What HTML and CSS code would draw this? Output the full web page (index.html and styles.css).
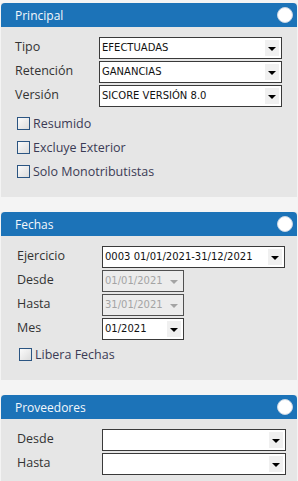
FILE: index.html
```html
<!DOCTYPE html>
<html lang="es">
<head>
    <meta charset="UTF-8">
    <meta name="viewport" content="width=device-width, initial-scale=1.0">
    <title>Retenciones</title>
    <link rel="stylesheet" href="styles.css">
</head>
<body>
    <section class="panel panel-principal">
        <header class="panel-head">
            <span>Principal</span>
            <i class="knob"></i>
        </header>
        <div class="panel-body">
            <div class="form">
                <label>Tipo</label>
                <div class="select"><span>EFECTUADAS</span><b class="arrow"></b></div>
                <label>Retención</label>
                <div class="select"><span>GANANCIAS</span><b class="arrow"></b></div>
                <label>Versión</label>
                <div class="select"><span>SICORE VERSIÓN 8.0</span><b class="arrow"></b></div>
            </div>
            <ul class="checks">
                <li><input type="checkbox"> Resumido</li>
                <li><input type="checkbox"> Excluye Exterior</li>
                <li><input type="checkbox"> Solo Monotributistas</li>
            </ul>
        </div>
    </section>

    <section class="panel panel-fechas">
        <header class="panel-head">
            <span>Fechas</span>
            <i class="knob"></i>
        </header>
        <div class="panel-body">
            <div class="form">
                <label>Ejercicio</label>
                <div class="select"><span>0003 01/01/2021-31/12/2021</span><b class="arrow"></b></div>
                <label>Desde</label>
                <div class="select small disabled"><span>01/01/2021</span><b class="arrow"></b></div>
                <label>Hasta</label>
                <div class="select small disabled"><span>31/01/2021</span><b class="arrow"></b></div>
                <label>Mes</label>
                <div class="select small"><span>01/2021</span><b class="arrow"></b></div>
            </div>
            <ul class="checks">
                <li><input type="checkbox"> Libera Fechas</li>
            </ul>
        </div>
    </section>

    <section class="panel panel-prov">
        <header class="panel-head">
            <span>Proveedores</span>
            <i class="knob"></i>
        </header>
        <div class="panel-body">
            <div class="form">
                <label>Desde</label>
                <div class="select"><span></span><b class="arrow"></b></div>
                <label>Hasta</label>
                <div class="select"><span></span><b class="arrow"></b></div>
            </div>
        </div>
    </section>
</body>
</html>
```
FILE: styles.css
```css
*{
    box-sizing: border-box;
}
body{
    margin: 0;
    padding-top: 3px;
    background-color: #f4f4f4;
    font-family: "Open Sans", "Noto Sans", sans-serif;
    color: #333;
}
.panel{
    margin: 0 1px 15px;
    background-color: #e6e6e6;
}
.panel-head{
    height: 24px;
    padding: 0 4px 0 14px;
    display: flex;
    align-items: center;
    justify-content: space-between;
    background-color: #1c73b8;
    color: #f4f8fc;
    font-size: 12px;
    border-radius: 4px 4px 0 0;
}
.knob{
    width: 16px;
    height: 16px;
    border-radius: 50%;
    background-color: #fff;
    border: 1px solid #c9d6e4;
}
.panel-body{
    padding: 10px 15px 0 14px;
}
.panel-principal .panel-body{
    height: 170px;
}
.panel-fechas .panel-body{
    height: 144px;
    padding-left: 16px;
    padding-right: 12px;
}
.panel-prov .panel-body{
    padding-left: 16px;
    padding-right: 11px;
    height: 70px;
}
.form{
    display: grid;
    grid-template-columns: 84px 1fr;
    row-gap: 2px;
    align-items: center;
}
.panel-fechas .form, .panel-prov .form{
    grid-template-columns: 85px 1fr;
}
.form label{
    font-size: 12.5px;
    line-height: 18px;
    margin-top: -3px;
}
.select{
    height: 22px;
    display: flex;
    align-items: center;
    background-color: #fff;
    border: 1px solid #3a3a3a;
    padding: 2px;
    font-family: "DejaVu Sans", sans-serif;
    font-size: 10px;
    color: #111;
}
.select span{
    flex: 1;
    line-height: 16px;
    white-space: nowrap;
    overflow: hidden;
}
.select.small{
    width: 82px;
}
.arrow{
    width: 14px;
    height: 100%;
    background-color: #f0f0f0;
    position: relative;
}
.arrow::after{
    content: "";
    position: absolute;
    left: 3px;
    top: 7px;
    border-left: 4px solid transparent;
    border-right: 4px solid transparent;
    border-top: 4px solid #000;
}
.select.disabled{
    background-color: #ececec;
    border-color: #505050;
    color: #a4a4a4;
}
.select.disabled .arrow{
    background-color: transparent;
}
.select.disabled .arrow::after{
    border-top-color: #a4a4a4;
}
.checks{
    list-style: none;
    margin: 4px 0 0 2px;
    padding: 0;
    font-size: 12.5px;
    color: #3b3b55;
}
.checks li{
    height: 24px;
    display: flex;
    align-items: center;
    gap: 3px;
}
.checks input{
    appearance: none;
    margin: 0;
    width: 13px;
    height: 13px;
    border: 1px solid #2b5582;
    background: linear-gradient(135deg, #fbfbfb, #dcdcdc);
}
.panel-fechas .checks{
    margin-top: 2px;
}
```
